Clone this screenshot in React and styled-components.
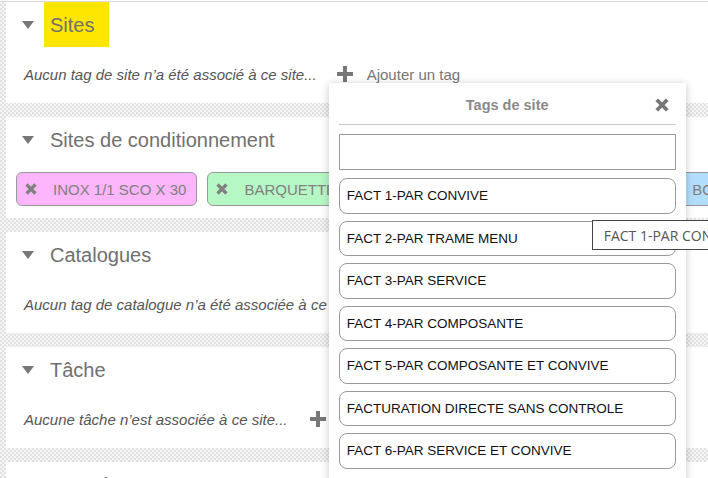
import React from 'react'
import styled, { createGlobalStyle } from 'styled-components'

const GlobalStyle = createGlobalStyle`
  html, body {
    margin: 0;
    overflow: hidden;
    background: #fff;
  }
  body {
    font-family: "Liberation Sans", Arial, sans-serif;
  }
`

const Page = styled.div`
  margin-top: 1px;
  border-top: 1px solid #dadada;
  padding-left: 6px;
  display: flex;
  flex-direction: column;
  gap: 14px;
  background-color: #ececec;
  background-image: repeating-conic-gradient(#e1e1e1 0 25%, #f6f6f6 0 50%);
  background-size: 4px 4px;
  min-height: 600px;
`

const Section = styled.section`
  background: #fff;
  height: 101px;
  box-sizing: border-box;
`

const Header = styled.div`
  display: flex;
  align-items: stretch;
  height: 45px;
  padding-left: 16px;
`

const Caret = styled.span`
  align-self: center;
  width: 0;
  height: 0;
  border-left: 6.5px solid transparent;
  border-right: 6.5px solid transparent;
  border-top: 8px solid #777;
  margin-top: 1px;
`

const Title = styled.h2`
  display: flex;
  align-items: center;
  margin: 0 0 0 10px;
  padding: 1px 15px 0 6px;
  font-size: 20px;
  font-weight: normal;
  color: #707070;
  background: ${p => (p.$highlight ? '#ffe600' : 'transparent')};
`

const Row = styled.div`
  display: flex;
  align-items: center;
  height: 24px;
  margin-top: 15px;
  padding-left: 18px;
`

const Empty = styled.span`
  font-size: 15px;
  font-style: italic;
  color: #555;
  white-space: nowrap;
`

const AddTag = styled.div`
  position: relative;
  display: flex;
  align-items: center;
  gap: 14px;
  height: 24px;
  margin-left: ${p => p.$offset || 20}px;
  font-size: 15px;
  color: #777;
  white-space: nowrap;
`

const ChipRow = styled.div`
  display: flex;
  gap: 10px;
  margin-top: 10px;
  padding-left: 10px;
  overflow: hidden;
`

const Chip = styled.div`
  display: flex;
  align-items: center;
  gap: 16px;
  flex-shrink: 0;
  height: 34px;
  box-sizing: border-box;
  padding: 0 10px 0 8px;
  border: 1px solid #999;
  border-radius: 6px;
  background: ${p => p.$color};
  color: #808080;
  font-size: 15px;
  white-space: nowrap;
`

const Popup = styled.div`
  position: absolute;
  left: -8px;
  top: 21px;
  z-index: 10;
  width: 357px;
  box-sizing: border-box;
  padding: 0 10px 14px;
  background: #fff;
  box-shadow: 0 1px 8px rgba(0, 0, 0, 0.22);
`

const PopupHeader = styled.div`
  display: grid;
  grid-template-columns: 1fr auto 1fr;
  align-items: center;
  height: 42px;
  box-sizing: border-box;
  padding-top: 3px;
  border-bottom: 1px solid #c8c8c8;
`

const PopupTitle = styled.span`
  grid-column: 2;
  font-size: 14.5px;
  font-weight: bold;
  color: #8a8a8a;
`

const CloseButton = styled.span`
  grid-column: 3;
  justify-self: end;
  display: flex;
  padding-right: 7px;
  margin-top: -1px;
  color: #777;
`

const SearchInput = styled.input`
  display: block;
  width: 100%;
  height: 36px;
  margin-top: 9px;
  box-sizing: border-box;
  border: 1px solid #999;
  border-radius: 0;
  outline: none;
`

const OptionList = styled.div`
  display: flex;
  flex-direction: column;
  gap: 7px;
  margin-top: 8px;
`

const Option = styled.div`
  display: flex;
  align-items: center;
  height: 35.5px;
  box-sizing: border-box;
  padding: 0 7px;
  border: 1px solid #999;
  border-radius: 8px;
  font-size: 13.5px;
  color: #111;
  white-space: nowrap;
`

const Tooltip = styled.div`
  position: absolute;
  left: 263px;
  top: 137px;
  z-index: 2;
  display: flex;
  align-items: center;
  height: 30px;
  box-sizing: border-box;
  padding: 0 11px;
  border: 1px solid #444;
  background: #fff;
  font-family: "Open Sans", sans-serif;
  font-size: 14px;
  color: #555;
  white-space: nowrap;
`

const Plus = () => (
  <svg width="16" height="16" viewBox="0 0 16 16" fill="#777">
    <rect x="0" y="6" width="16" height="4" />
    <rect x="6" y="0" width="4" height="16" />
  </svg>
)

const Cross = ({ size = 12 }) => (
  <svg width={size} height={size} viewBox="0 0 12 12" stroke="currentColor" strokeWidth="3.2">
    <path d="M1.5 1.5 L10.5 10.5 M10.5 1.5 L1.5 10.5" />
  </svg>
)

const chips = [
  { label: 'INOX 1/1 SCO X 30', color: '#fdb6fb' },
  { label: 'BARQUETTE ALU OPERCULEE 1/2 GN X 12 PORTIONS', color: '#b6f7c6' },
  { label: 'BOITE ISOTHERME 1/1', color: '#b3defb' },
]

const options = [
  'FACT 1-PAR CONVIVE',
  'FACT 2-PAR TRAME MENU',
  'FACT 3-PAR SERVICE',
  'FACT 4-PAR COMPOSANTE',
  'FACT 5-PAR COMPOSANTE ET CONVIVE',
  'FACTURATION DIRECTE SANS CONTROLE',
  'FACT 6-PAR SERVICE ET CONVIVE',
]

const SectionHeader = ({ title, highlight }) => (
  <Header>
    <Caret />
    <Title $highlight={highlight}>{title}</Title>
  </Header>
)

const TagPicker = () => (
  <Popup>
    <PopupHeader>
      <PopupTitle>Tags de site</PopupTitle>
      <CloseButton>
        <Cross size={14} />
      </CloseButton>
    </PopupHeader>
    <SearchInput />
    <OptionList>
      {options.map(o => (
        <Option key={o}>{o}</Option>
      ))}
    </OptionList>
    <Tooltip>FACT 1-PAR CONVIVE</Tooltip>
  </Popup>
)

export default function App() {
  return (
    <>
      <GlobalStyle />
      <Page>
        <Section>
          <SectionHeader title="Sites" highlight />
          <Row>
            <Empty>Aucun tag de site n’a été associé à ce site...</Empty>
            <AddTag>
              <Plus />
              Ajouter un tag
              <TagPicker />
            </AddTag>
          </Row>
        </Section>

        <Section>
          <SectionHeader title="Sites de conditionnement" />
          <ChipRow>
            {chips.map(c => (
              <Chip key={c.label} $color={c.color}>
                <Cross />
                {c.label}
              </Chip>
            ))}
          </ChipRow>
        </Section>

        <Section>
          <SectionHeader title="Catalogues" />
          <Row>
            <Empty>Aucun tag de catalogue n’a été associée à ce site...</Empty>
          </Row>
        </Section>

        <Section>
          <SectionHeader title="Tâche" />
          <Row>
            <Empty>Aucune tâche n’est associée à ce site...</Empty>
            <AddTag $offset={22}>
              <Plus />
              Ajouter une tâche
            </AddTag>
          </Row>
        </Section>

        <Section>
          <SectionHeader title="Températures" />
        </Section>
      </Page>
    </>
  )
}
